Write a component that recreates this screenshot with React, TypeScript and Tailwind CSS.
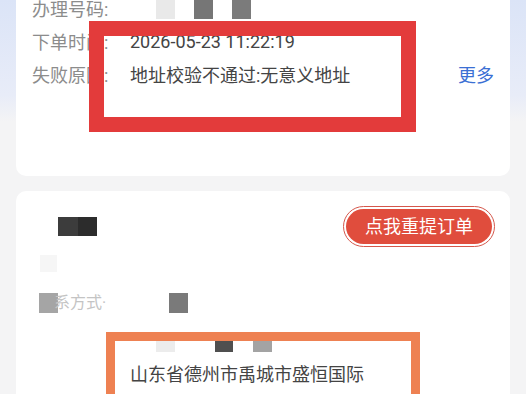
import type { ReactNode } from "react";

const FONT = { fontFamily: "Roboto, 'Noto Sans CJK SC', sans-serif" };

/* Mosaic block standing in for a blurred value. */
function Pix({ className }: { className: string }): ReactNode {
    return <span className={`block shrink-0 ${className}`} />;
}

function Row({ label, children }: { label: string; children: ReactNode }): ReactNode {
    return (
        <div className="flex h-[33px] items-center">
            <span className="w-[98px] shrink-0 text-[#8c8c8c]">{label}</span>
            {children}
        </div>
    );
}

export default function App(): ReactNode {
    return (
        <div
            style={FONT}
            className="relative h-[394px] w-[526px] overflow-hidden bg-[linear-gradient(180deg,#dbe4f7_0px,#e8ecf8_95px,#f4f4f5_122px)] px-4 text-[18px]"
        >
            {/* Order card, top scrolled off screen */}
            <div className="flex h-[176px] flex-col rounded-b-[10px] bg-white pl-4 pr-4">
                <div className="-mt-[7px]">
                    <Row label="办理号码:">
                        <div className="flex gap-[19px] pl-[26px]">
                            <Pix className="h-[19px] w-[19px] bg-[#e9e9e9]" />
                            <Pix className="h-[19px] w-[19px] bg-[#767676]" />
                            <Pix className="h-[19px] w-[19px] bg-[#7b7b7b]" />
                        </div>
                    </Row>
                    <Row label="下单时间:">
                        <span className="-mt-[2px] text-[#444]">2026-05-23 11:22:19</span>
                    </Row>
                    <Row label="失败原因:">
                        <span className="text-[#444]">地址校验不通过:无意义地址</span>
                        <span className="ml-auto text-[#3b6fd4]">更多</span>
                    </Row>
                </div>
            </div>

            {/* Resubmit card */}
            <div className="mt-[15px] flex h-[260px] flex-col rounded-t-[10px] bg-white pr-[15px] pt-[15px]">
                <div className="flex h-[41px] items-center justify-between">
                    <div className="ml-[42px] flex">
                        <Pix className="h-[19px] w-[20px] bg-[#3c3c3c]" />
                        <Pix className="h-[19px] w-[19px] bg-[#2c2c2c]" />
                    </div>
                    <div className="rounded-full border border-[#d5574b] p-[2px]">
                        <div className="flex h-[35px] w-[146px] items-center justify-center rounded-full bg-[#e04d3d] text-[18px] text-white">
                            点我重提订单
                        </div>
                    </div>
                </div>

                <Pix className="ml-[24px] mt-[8px] h-[17px] w-[17px] bg-[#f6f6f6]" />

                <div className="mt-[21px] flex h-[20px] items-center">
                    <Pix className="ml-[23px] h-[20px] w-[19px] bg-[#a5a5a5]" />
                    <span className="-ml-[4px] text-[16px] leading-[20px] text-[#c4c4c4]">系方式·</span>
                    <Pix className="ml-[63px] h-[20px] w-[19px] bg-[#7a7a7a]" />
                </div>

                <div className="mt-[28px] flex pl-[140px]">
                    <Pix className="h-[11px] w-[19px] bg-[#ececec]" />
                    <Pix className="ml-[40px] h-[11px] w-[18px] bg-[#4f4f4f]" />
                    <Pix className="ml-[20px] h-[11px] w-[19px] bg-[#a3a3a3]" />
                </div>

                <div className="mt-[12px] pl-[114px] leading-[22px] text-[#444]">山东省德州市禹城市盛恒国际</div>
            </div>

            {/* Annotation boxes drawn over the screenshot */}
            <div className="absolute left-[89px] top-[21px] h-[111px] w-[327px] border-[15px] border-[#e33b3b]" />
            <div className="absolute left-[106px] top-[332px] h-[80px] w-[314px] border-[9px] border-[#ee8152]" />
        </div>
    );
}
